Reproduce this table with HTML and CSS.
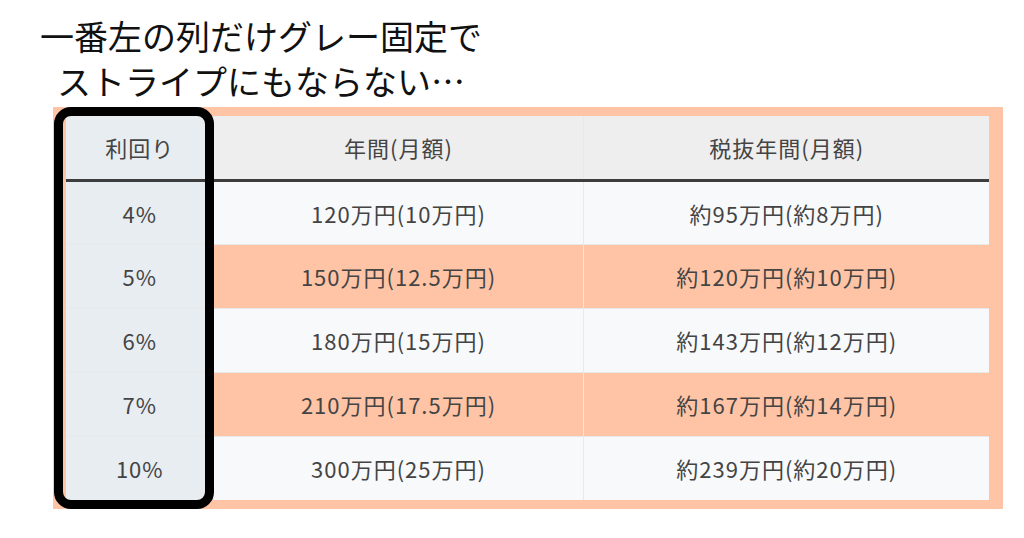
FILE: index.html
```html
<!DOCTYPE html>
<html lang="ja">
<head>
<meta charset="utf-8">
<link rel="stylesheet" href="styles.css">
</head>
<body>
<div class="caption">
  <p>一番左の列だけグレー固定で</p>
  <p>ストライプにもならない…</p>
</div>
<div class="frame">
  <table class="rates">
    <thead>
      <tr><th class="fixed">利回り</th><th class="c2">年間(月額)</th><th class="c3">税抜年間(月額)</th></tr>
    </thead>
    <tbody>
      <tr><td class="fixed">4%</td><td>120万円(10万円)</td><td>約95万円(約8万円)</td></tr>
      <tr><td class="fixed">5%</td><td>150万円(12.5万円)</td><td>約120万円(約10万円)</td></tr>
      <tr><td class="fixed">6%</td><td>180万円(15万円)</td><td>約143万円(約12万円)</td></tr>
      <tr><td class="fixed">7%</td><td>210万円(17.5万円)</td><td>約167万円(約14万円)</td></tr>
      <tr><td class="fixed">10%</td><td>300万円(25万円)</td><td>約239万円(約20万円)</td></tr>
    </tbody>
  </table>
  <div class="highlight"></div>
</div>
</body>
</html>
```
FILE: styles.css
```css
* { box-sizing: border-box; }
html, body {
  margin: 0;
  padding: 0;
  background: #fff;
}
body {
  width: 1024px;
  height: 538px;
  overflow: hidden;
  font-family: "Noto Sans CJK JP", sans-serif;
}
.caption {
  width: 522px;
  padding-top: 13px;
  text-align: center;
  color: #111;
  font-size: 34px;
  line-height: 45px;
}
.caption p { margin: 0; }
.frame {
  position: relative;
  margin: 4px 0 0 53px;
  width: 950px;
  height: 402px;
  padding: 9px 14px 6px 13px;
  background: #ffc4a6;
}
.rates {
  width: 923px;
  border-collapse: collapse;
  table-layout: fixed;
  color: #444;
  font-size: 22px;
  letter-spacing: 1px;
}
.rates th, .rates td {
  text-align: center;
  font-weight: 400;
  padding: 0 0 0 1px;
  height: 64px;
  border: 1px solid #e9e9e9;
}
.rates th {
  background: #eeeeee;
  border-bottom: 3px solid #3d3d3d;
  border-top: none;
}
.rates th.fixed { width: 147px; }
.rates th.c2 { width: 370px; }
.rates tbody tr:nth-child(odd) td { background: #f8f9fb; }
.rates tbody tr:nth-child(even) td { background: #ffc4a6; }
.rates tbody tr:last-child td { border-bottom: none; }
.rates .fixed,
.rates tbody tr td.fixed {
  background: #e8edf2;
  border-left: none;
}
.rates tr > :last-child { border-right: none; }
.highlight {
  position: absolute;
  left: 1px;
  top: 0;
  width: 160px;
  height: 402px;
  border: 9px solid #000;
  border-radius: 17px;
}
```
